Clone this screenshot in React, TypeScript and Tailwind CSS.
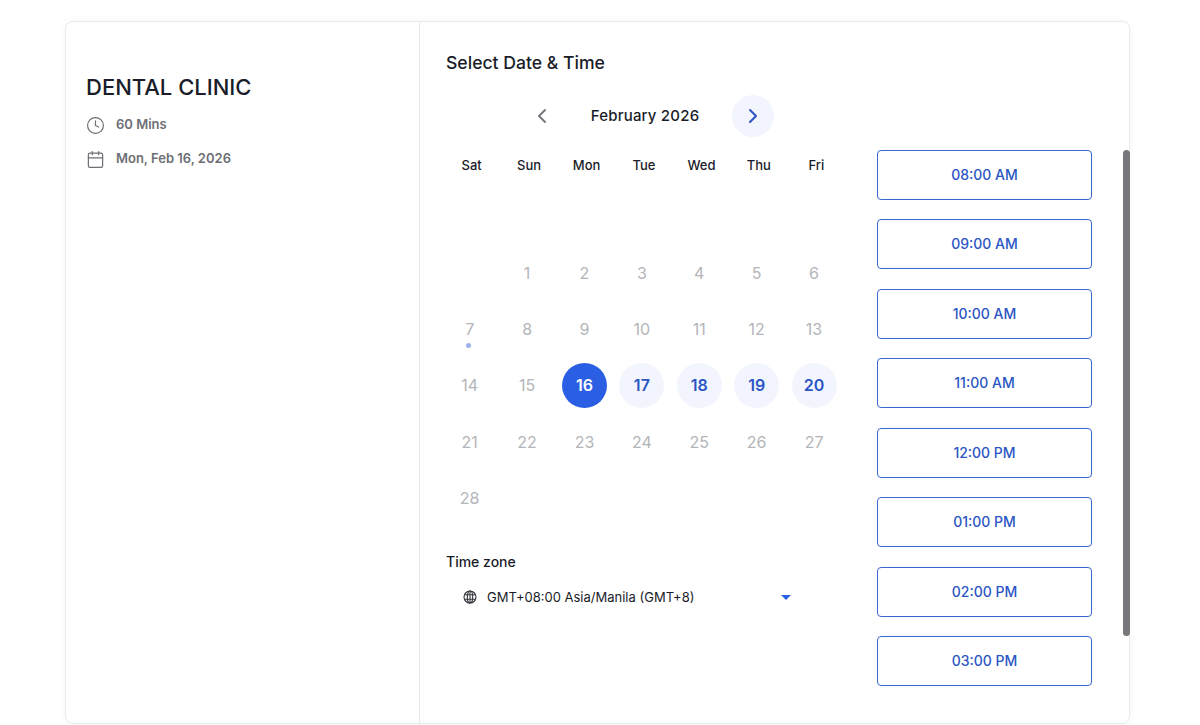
import React from 'react';
import { Calendar, ChevronLeft, ChevronRight, Clock } from 'lucide-react';

const WEEKDAYS = ['Sat', 'Sun', 'Mon', 'Tue', 'Wed', 'Thu', 'Fri'];
const TIMES = ['08:00 AM', '09:00 AM', '10:00 AM', '11:00 AM', '12:00 PM', '01:00 PM', '02:00 PM', '03:00 PM'];
const AVAILABLE = [17, 18, 19, 20];

const Day: React.FC<{ day: number | null }> = ({ day }) => {
    if (day === null) return <div className="h-[45px]" />;
    if (day === 16) {
        return (
            <div className="h-[45px] w-[45px] rounded-full bg-[#2b5fe3] flex items-center justify-center text-white font-semibold text-base">
                {day}
            </div>
        );
    }
    if (AVAILABLE.includes(day)) {
        return (
            <div className="h-[45px] w-[45px] rounded-full bg-[#f2f5fd] flex items-center justify-center text-[#2b55c4] font-semibold text-base">
                {day}
            </div>
        );
    }
    return (
        <div className="relative h-[45px] w-[45px] flex items-center justify-center text-[#b4b5b8] text-base">
            {day}
            {day === 7 && <span className="absolute bottom-[4px] left-[19px] h-[5px] w-[5px] rounded-full bg-[#9db1ea]" />}
        </div>
    );
};

const GlobeIcon: React.FC = () => (
    <svg width="14" height="14" viewBox="0 0 14 14" fill="none" stroke="#33353b" strokeWidth="1.1" className="shrink-0">
        <circle cx="7" cy="7" r="6" />
        <ellipse cx="7" cy="7" rx="2.7" ry="6" />
        <path d="M7 1v12M1.6 4.8h10.8M1.6 9.2h10.8" />
    </svg>
);

const App: React.FC = () => {
    const cells: (number | null)[] = [...Array(7).fill(null)];
    for (let d = 1; d <= 28; d++) {
        if (d === 1) cells.push(null);
        cells.push(d);
    }

    return (
        <div className="h-[725px] overflow-hidden bg-white pt-[21px] pl-[65px] font-['Inter',sans-serif] text-[#1a1d29]">
            <div className="relative flex h-[703px] w-[1065px] rounded-lg border border-[#e9eaec] bg-white shadow-[0_0_6px_rgba(0,0,0,0.04)]">
                {/* Left panel */}
                <div className="w-[354px] shrink-0 border-r border-[#e5e7eb] pl-5 pt-[49px]">
                    <h1 className="text-[22px] leading-8 font-medium">DENTAL CLINIC</h1>
                    <div className="mt-[10px] flex h-[24px] items-center gap-[11px] text-[#6d6f75]">
                        <Clock size={19} strokeWidth={1.5} />
                        <span className="text-[13px] font-semibold">60 Mins</span>
                    </div>
                    <div className="mt-[10px] flex h-[24px] items-center gap-[11px] text-[#6d6f75]">
                        <Calendar size={19} strokeWidth={1.5} />
                        <span className="text-[13px] font-semibold">Mon, Feb 16, 2026</span>
                    </div>
                </div>

                {/* Right panel */}
                <div className="flex-1 pl-[26px] pt-[29px]">
                    <h2 className="text-[17.6px] leading-6 font-medium">Select Date &amp; Time</h2>
                    <div className="flex">
                        <div className="w-[431px] shrink-0">
                            <div className="mt-[20px] flex h-[42px] items-center pl-[84px]">
                                <ChevronLeft size={24} strokeWidth={2} className="text-[#77787c]" />
                                <span className="ml-[32px] w-[118px] text-center text-[15px] font-medium tracking-[0.2px] whitespace-nowrap">February 2026</span>
                                <div className="ml-[28px] flex h-[42px] w-[42px] items-center justify-center rounded-full bg-[#f2f5fd]">
                                    <ChevronRight size={24} strokeWidth={2} className="text-[#2b55c4]" />
                                </div>
                            </div>

                            <div className="mt-[18px] -ml-[3px] grid w-[402px] grid-cols-7">
                                {WEEKDAYS.map(w => (
                                    <div key={w} className="text-center text-[13px] leading-5 font-medium">{w}</div>
                                ))}
                            </div>

                            <div className="mt-[19px] -ml-[5px] grid w-[402px] grid-cols-[repeat(7,57.4px)] gap-y-[11.25px]">
                                {cells.map((d, i) => (
                                    <div key={i} className="flex justify-center"><Day day={d} /></div>
                                ))}
                            </div>

                            {/* Time zone */}
                            <div className="mt-[32px] text-sm leading-5 font-medium">Time zone</div>
                            <div className="mt-[15px] flex w-[345px] items-center pl-[17px] text-[13px] leading-5">
                                <GlobeIcon />
                                <span className="ml-[10px] flex-1">GMT+08:00 Asia/Manila (GMT+8)</span>
                                <span className="h-0 w-0 border-x-[5.5px] border-t-[5.5px] border-x-transparent border-t-[#2b5fe3]" />
                            </div>
                        </div>

                        <div className="mt-[75px] flex w-[215px] flex-col gap-[19.45px]">
                            {TIMES.map(t => (
                                <button key={t} className="h-[50px] shrink-0 rounded border border-[#3a67d0] bg-white text-sm font-medium text-[#2b55c4]">
                                    {t}
                                </button>
                            ))}
                        </div>
                    </div>
                </div>

                {/* Scrollbar thumb */}
                <div className="absolute right-[-1px] top-[128px] h-[486px] w-[7px] rounded-full bg-[#77787b]" />
            </div>
        </div>
    );
};

export default App;
